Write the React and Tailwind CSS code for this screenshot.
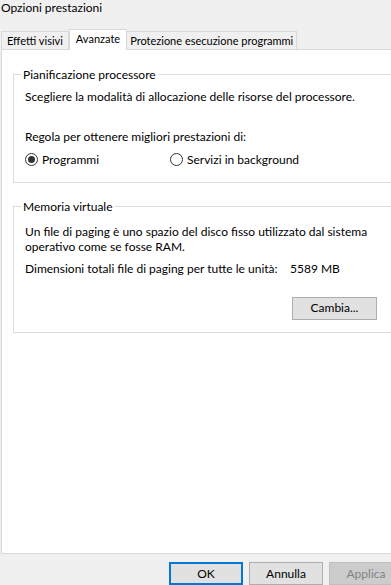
const Radio = ({ checked, label }) => (
  <label className="flex items-center gap-[4px]">
    <span className="flex h-[13px] w-[13px] items-center justify-center rounded-full border border-[#333333] bg-white">
      {checked && <span className="h-[7px] w-[7px] rounded-full bg-[#333333]" />}
    </span>
    <span>{label}</span>
  </label>
);

const GroupBox = ({ title, children, className = '' }) => (
  <fieldset className={`border border-r-0 border-[#dcdcdc] ${className}`}>
    <legend className="ml-[7px] px-[2px] leading-[14px]">{title}</legend>
    <div className="pl-[11px]">{children}</div>
  </fieldset>
);

const Button = ({ children, variant = 'default' }) => {
  const styles = {
    default: 'border-[#adadad] bg-[#e1e1e1] text-black',
    primary: 'border-[#0078d7] bg-[#e1e1e1] text-black ring-1 ring-inset ring-[#0078d7]',
    disabled: 'border-[#bfbfbf] bg-[#cccccc] text-[#838383]',
  };
  return (
    <button className={`h-[23px] w-[74px] shrink-0 border ${styles[variant]}`}>{children}</button>
  );
};

export default function App() {
  return (
    <div
      className="flex h-[585px] w-[391px] flex-col overflow-hidden bg-[#f0f0f0] text-[12px] text-black"
      style={{ fontFamily: 'Lato, "Noto Sans", sans-serif' }}
    >
      {/* Title */}
      <div className="h-[29px] pl-[1px] pt-[1px] leading-[14px]">Opzioni prestazioni</div>

      {/* Tabs */}
      <div className="flex items-end pl-[1px] text-[11px]">
        <div className="h-[18px] border border-b-0 border-[#d9d9d9] bg-[#f0f0f0] px-[5px] leading-[17px]">
          Effetti visivi
        </div>
        <div className="relative z-10 -mb-[1px] h-[21px] border border-b-0 border-[#d9d9d9] bg-white px-[6px] leading-[18px]">
          Avanzate
        </div>
        <div className="h-[18px] border border-b-0 border-l-0 border-[#d9d9d9] bg-[#f0f0f0] px-[3px] leading-[17px]">
          Protezione esecuzione programmi
        </div>
      </div>

      {/* Panel */}
      <div className="ml-[1px] flex h-[506px] flex-col border border-r-0 border-[#d9d9d9] bg-white pl-[11px] pt-[18px]">
        <GroupBox title="Pianificazione processore" className="h-[115px]">
          <p className="mt-[7px] leading-[15px]">
            Scegliere la modalità di allocazione delle risorse del processore.
          </p>
          <p className="mt-[25px] leading-[15px]">Regola per ottenere migliori prestazioni di:</p>
          <div className="mt-[7px] flex">
            <div className="w-[145px]">
              <Radio checked label="Programmi" />
            </div>
            <Radio label="Servizi in background" />
          </div>
        </GroupBox>

        <GroupBox title="Memoria virtuale" className="mt-[17px] h-[133px]">
          <p className="mt-[10px] w-[352px] leading-[15px]">
            Un file di paging è uno spazio del disco fisso utilizzato dal sistema operativo come se fosse RAM.
          </p>
          <div className="mt-[7px] flex leading-[15px]">
            <span className="w-[265px]">Dimensioni totali file di paging per tutte le unità:</span>
            <span>5589 MB</span>
          </div>
          <div className="mt-[21px] flex pl-[267px]">
            <button className="h-[23px] w-[85px] border border-[#adadad] bg-[#e1e1e1]">Cambia...</button>
          </div>
        </GroupBox>
      </div>

      {/* Footer */}
      <div className="mt-[8px] flex gap-[6px] pl-[169px]">
        <Button variant="primary">OK</Button>
        <Button>Annulla</Button>
        <Button variant="disabled">Applica</Button>
      </div>
    </div>
  );
}
